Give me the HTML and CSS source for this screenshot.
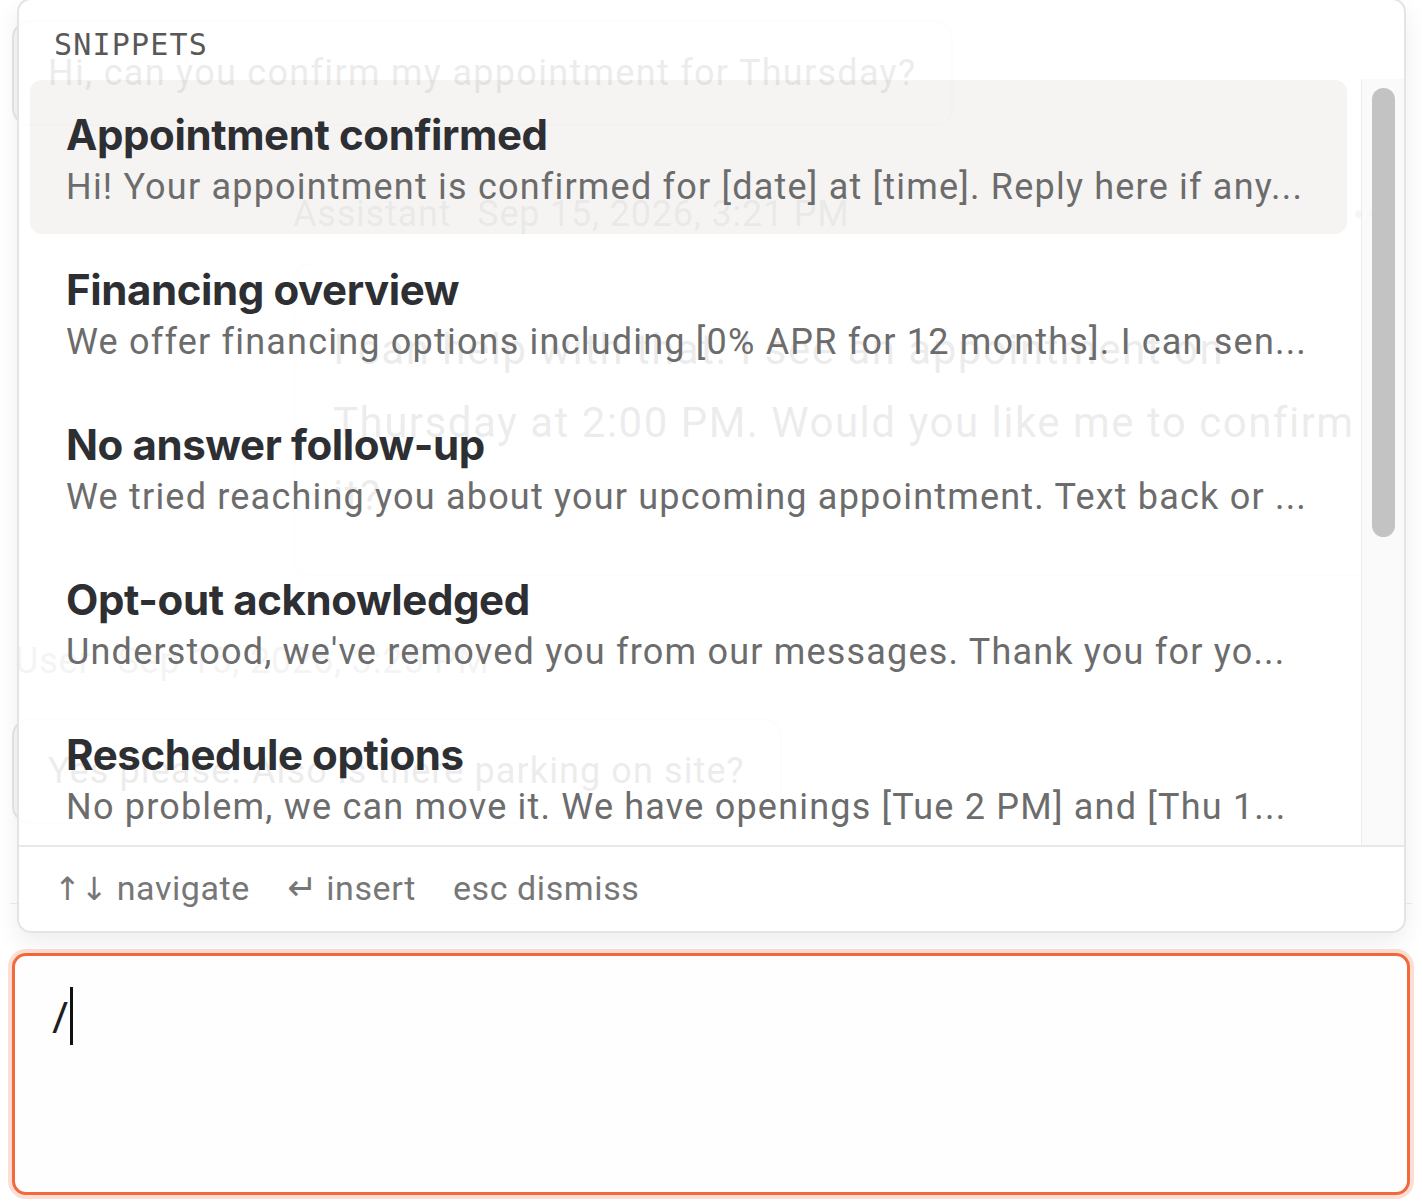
FILE: index.html
```html
<!DOCTYPE html>
<html lang="en">
<head>
<meta charset="utf-8">
<title>Snippets</title>
<link rel="stylesheet" href="styles.css">
</head>
<body>
<div class="app">
  <div class="thread">
    <div class="bubble bubble-user bubble-first">Hi, can you confirm my appointment for Thursday?</div>
    <div class="meta meta-assistant">
      <span class="meta-text"><span class="who">Assistant</span><span>Sep 15, 2026, 3:21 PM</span></span>
      <span class="more"><i></i><i></i><i></i></span>
    </div>
    <div class="bubble bubble-assistant">I can help with that. I see an appointment on<br>Thursday at 2:00 PM. Would you like me to confirm<br>it?</div>
    <div class="meta meta-user"><span class="meta-text"><span class="who">User</span><span>Sep 15, 2026, 3:25 PM</span></span></div>
    <div class="bubble bubble-user bubble-second">Yes please. Also is there parking on site?</div>
  </div>
  <div class="composer-area">
    <div class="composer">
      <div class="popup">
        <div class="popup-header">SNIPPETS</div>
        <div class="popup-body">
          <div class="list">
            <div class="item active">
              <div class="item-title">Appointment confirmed</div>
              <div class="item-desc">Hi! Your appointment is confirmed for [date] at [time]. Reply here if any...</div>
            </div>
            <div class="item">
              <div class="item-title">Financing overview</div>
              <div class="item-desc">We offer financing options including [0% APR for 12 months]. I can sen...</div>
            </div>
            <div class="item">
              <div class="item-title">No answer follow-up</div>
              <div class="item-desc">We tried reaching you about your upcoming appointment. Text back or ...</div>
            </div>
            <div class="item">
              <div class="item-title">Opt-out acknowledged</div>
              <div class="item-desc">Understood, we've removed you from our messages. Thank you for yo...</div>
            </div>
            <div class="item">
              <div class="item-title">Reschedule options</div>
              <div class="item-desc">No problem, we can move it. We have openings [Tue 2 PM] and [Thu 1...</div>
            </div>
          </div>
          <div class="gutter"><div class="thumb"></div></div>
        </div>
        <div class="popup-footer">
          <span class="hint"><span class="glyph">↑↓</span> navigate</span>
          <span class="hint"><span class="glyph glyph-enter">↵</span> insert</span>
          <span class="hint">esc dismiss</span>
        </div>
      </div>
      <div class="input"><span class="slash">/</span><span class="caret"></span></div>
    </div>
  </div>
</div>
</body>
</html>
```

FILE: styles.css
```css
* { box-sizing: border-box; }
html, body { margin: 0; padding: 0; background: #ffffff; }
body { font-family: Roboto, "Liberation Sans", sans-serif; color: #333; }

.app {
  height: 1203px;
  display: flex;
  flex-direction: column;
  overflow: hidden;
}

/* ---------- background thread ---------- */
.thread {
  flex: 1;
  display: flex;
  flex-direction: column;
  align-items: flex-start;
  padding: 20px 12px 0 12px;
}
.bubble {
  border: 2px solid #e6e6e6;
  background: #f8f8f8;
  border-radius: 18px;
  color: #555555;
  font-size: 36px;
  line-height: 48px;
  letter-spacing: 1.3px;
}
.bubble-user { padding: 27px 35px 27px 34px; }
.bubble-second { margin-top: 33px; letter-spacing: 1.1px; }
.meta {
  font-size: 36px;
  line-height: 48px;
  letter-spacing: 0.8px;
  color: #9a9a9a;
  display: flex;
  align-items: center;
}
.meta-text .who { margin-right: 26px; }
.meta-assistant {
  margin-top: 64px;
  margin-left: 281px;
  width: 1102px;
  justify-content: space-between;
}
.more { display: flex; gap: 6px; margin-right: 4px; }
.more i { width: 8px; height: 8px; border-radius: 50%; background: #aaa; display: block; }
.bubble-assistant {
  margin-top: 25px;
  margin-left: 281px;
  width: 1102px;
  background: #ffffff;
  padding: 48px 20px 42px 38px;
  font-size: 42px;
  line-height: 73px;
  letter-spacing: 1.5px;
  white-space: nowrap;
}
.meta-user { margin-top: 61px; margin-left: 3px; }

/* ---------- composer ---------- */
.composer-area {
  border-top: 1px solid #ededed;
  margin: 0 10px;
  padding: 49px 2px 8px 2px;
}
.composer { position: relative; }
.input {
  height: 242px;
  border: 3px solid #f2693b;
  border-radius: 14px;
  box-shadow: 0 0 0 4px rgba(242, 105, 59, 0.22);
  background: #fefefe;
  padding: 31px 37px;
  display: flex;
  align-items: flex-start;
  font-family: "Open Sans", sans-serif;
  font-size: 44px;
  line-height: 58px;
  color: #1f1f1f;
}
.slash { font-weight: 400; }
.caret { display: block; width: 3px; height: 58px; background: #111; margin-left: 2px; }

/* ---------- snippet popup ---------- */
.popup {
  position: absolute;
  left: 5px;
  bottom: calc(100% + 20px);
  width: 1389px;
  height: 935px;
  background: rgba(255, 255, 255, 0.89);
  border: 2px solid #e4e4e4;
  border-radius: 14px;
  box-shadow: 0 10px 24px rgba(0, 0, 0, 0.07);
  display: flex;
  flex-direction: column;
  overflow: hidden;
  z-index: 5;
}
.popup-header {
  height: 79px;
  flex: none;
  padding: 27px 35px 0 35px;
  font-family: "DejaVu Sans Mono", "Liberation Mono", monospace;
  font-size: 30px;
  line-height: 36px;
  letter-spacing: 1.2px;
  color: #585858;
}
.popup-body {
  height: 766px;
  flex: none;
  display: flex;
}
.list {
  flex: 1;
  padding: 1px 14px 0 11px;
  overflow: hidden;
}
.item {
  height: 155px;
  padding: 30px 36px 0 36px;
  border-radius: 12px;
  white-space: nowrap;
  overflow: hidden;
}
.item.active { background: rgba(60, 40, 20, 0.05); height: 154px; margin-bottom: 1px; }
.item-title {
  font-family: Inter, "Noto Sans", sans-serif;
  font-weight: 700;
  font-size: 42px;
  line-height: 50px;
  color: #2d2f33;
  letter-spacing: -0.4px;
}
.item-desc {
  margin-top: 7px;
  font-family: Roboto, "Liberation Sans", sans-serif;
  font-size: 36px;
  line-height: 40px;
  letter-spacing: 1.2px;
  color: #6c6c6c;
}
.gutter {
  width: 43px;
  flex: none;
  border-left: 1px solid #ececec;
  background: rgba(248, 248, 248, 0.7);
  padding: 9px 0 0 10px;
}
.thumb {
  width: 23px;
  height: 449px;
  border-radius: 12px;
  background: #c3c3c3;
}
.popup-footer {
  flex: 1;
  border-top: 2px solid #e8e8e8;
  padding: 21px 35px 0 35px;
  display: flex;
  gap: 37px;
  font-family: Roboto, "Liberation Sans", sans-serif;
  font-size: 34px;
  line-height: 40px;
  letter-spacing: 0.6px;
  color: #777;
}
.glyph { font-family: "DejaVu Sans", sans-serif; font-size: 32px; letter-spacing: 0; }
.glyph-enter { font-size: 36px; }
```
